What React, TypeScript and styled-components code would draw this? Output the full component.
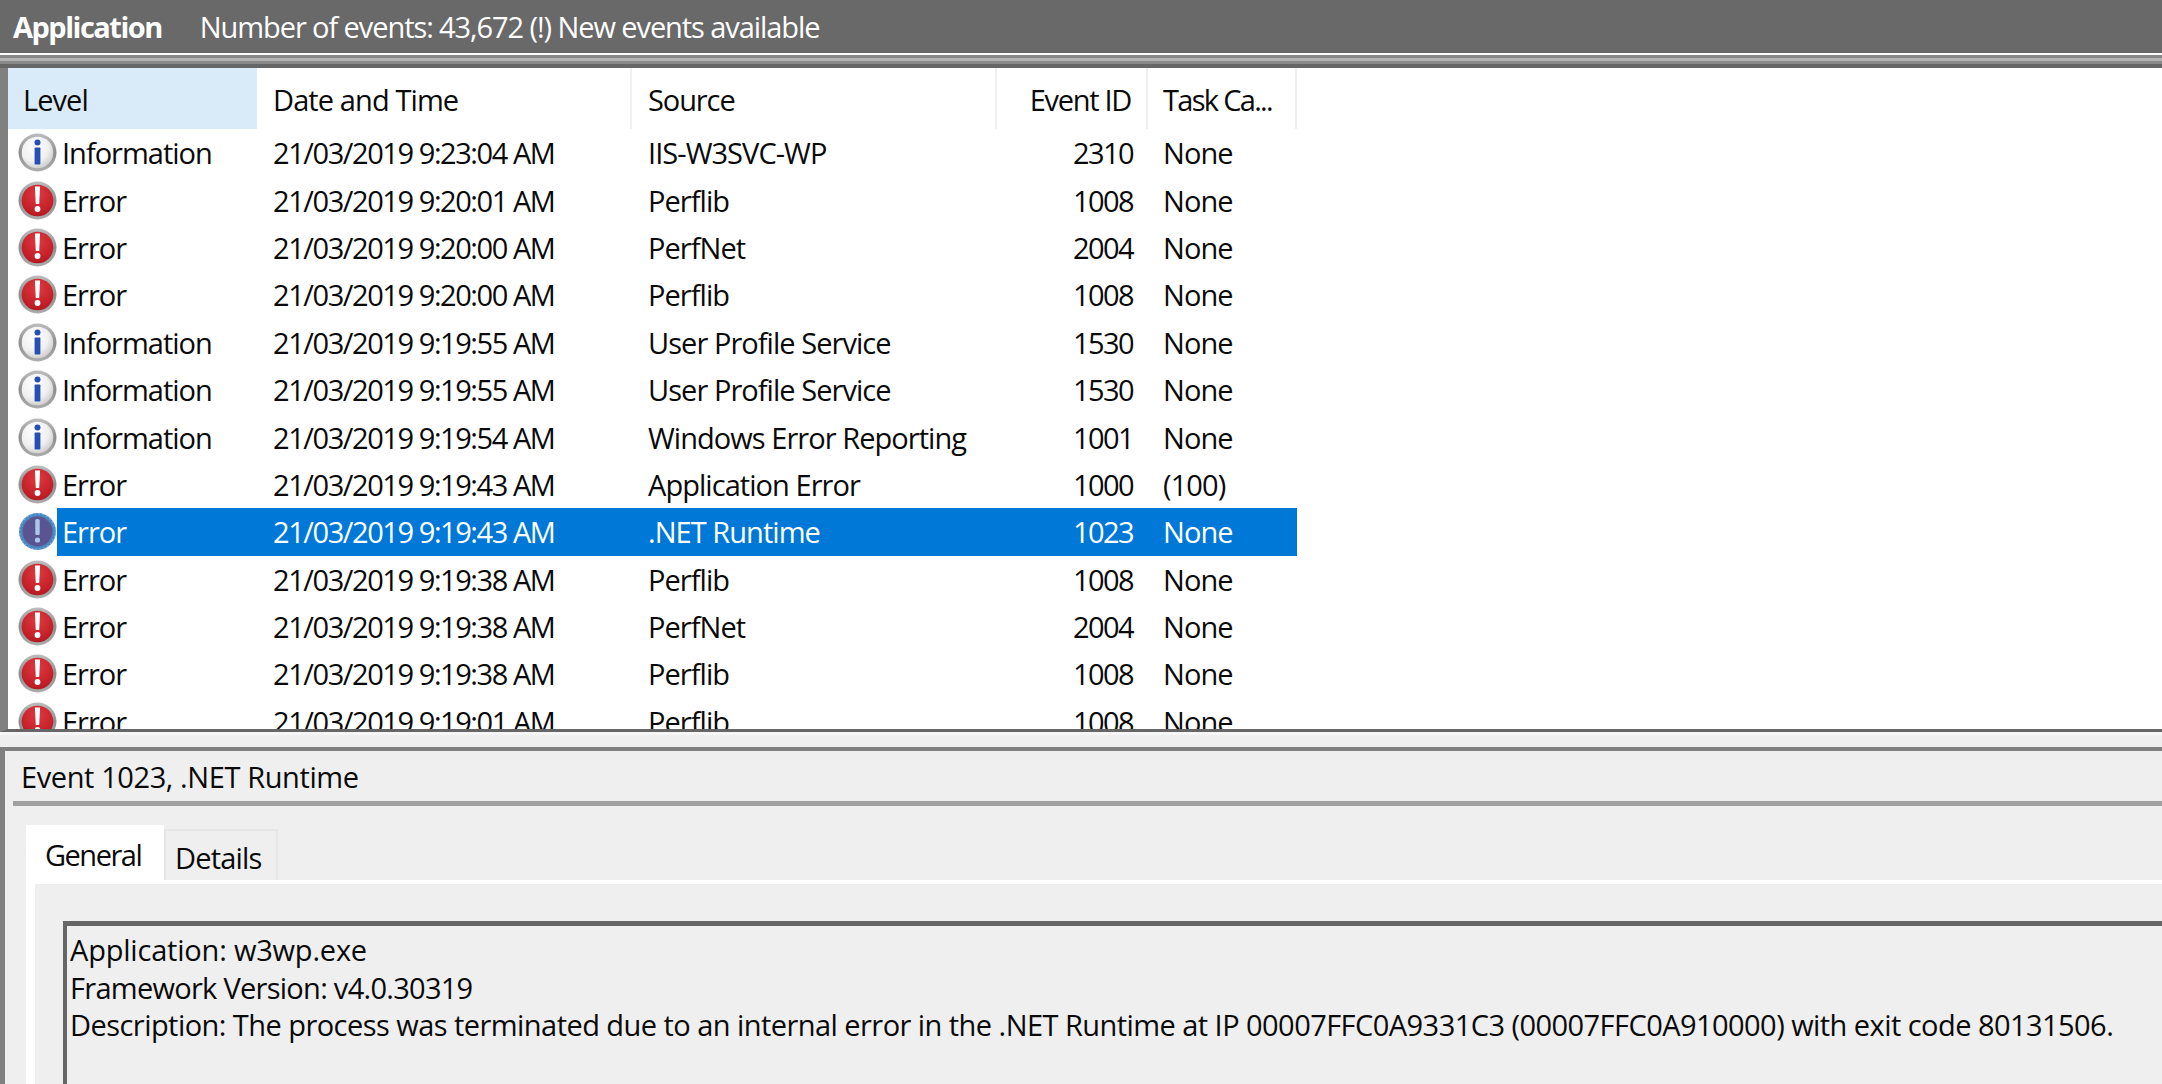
import React from 'react';
import styled, { createGlobalStyle } from 'styled-components';

const GlobalStyle = createGlobalStyle`
  html, body {
    margin: 0;
    padding: 0;
    height: 100%;
    overflow: hidden;
    background: #efefef;
  }
  #root {
    height: 100%;
  }
`;

const Page = styled.div`
  display: flex;
  flex-direction: column;
  height: 1084px;
  font-family: "Open Sans", "Noto Sans", sans-serif;
  font-size: 29px;
  color: #0a0a0a;
  overflow: hidden;
`;

const Banner = styled.div`
  display: flex;
  align-items: center;
  gap: 38px;
  height: 53px;
  flex: none;
  box-sizing: border-box;
  padding: 0 14px 0 13px;
  background: #696969;
  color: #fff;
  letter-spacing: -1.08px;
`;

const BannerTitle = styled.span`
  font-weight: 700;
  letter-spacing: -1.5px;
`;

const Splitter = styled.div`
  height: 15px;
  flex: none;
  box-sizing: border-box;
  border-top: 2px solid #fff;
  background: linear-gradient(#888 0 3px, #b4b4b4 3px 6px, #8a8a8a 6px 9px, #666 9px 13px);
`;

const ListPane = styled.div`
  height: 664px;
  flex: none;
  box-sizing: border-box;
  overflow: hidden;
  background: #fff;
  border-left: 8px solid #808080;
  border-bottom: 3px solid #666;
`;

const ListInner = styled.div`
  width: 1289px;
`;

const HeaderRow = styled.div`
  display: grid;
  grid-template-columns: 249px 375px 365px 151px 149px;
  height: 61px;
  align-items: stretch;
`;

const HeaderCell = styled.div<{ $active?: boolean; $right?: boolean; $pad: number; $tracking: number }>`
  display: flex;
  align-items: center;
  justify-content: ${p => (p.$right ? 'flex-end' : 'flex-start')};
  box-sizing: border-box;
  padding: 2px 15px 0 ${p => p.$pad}px;
  background: ${p => (p.$active ? '#d9ebf9' : 'transparent')};
  border-right: ${p => (p.$active ? 'none' : '2px solid #f0f0f0')};
  letter-spacing: ${p => p.$tracking}px;
  white-space: nowrap;
`;

const Row = styled.div`
  display: flex;
  align-items: center;
  height: 47.4px;
  padding-left: 10px;
`;

const RowIcon = styled.svg`
  width: 39px;
  height: 39px;
  flex: none;
`;

const RowBody = styled.div<{ $selected?: boolean }>`
  display: grid;
  grid-template-columns: 200px 375px 365px 151px 149px;
  flex: 1;
  height: 100%;
  align-items: center;
  background: ${p => (p.$selected ? '#0078d7' : 'transparent')};
  color: ${p => (p.$selected ? '#fff' : '#0a0a0a')};
`;

const Cell = styled.div<{ $right?: boolean; $pad: number; $tracking: number }>`
  box-sizing: border-box;
  padding: 0 15px 0 ${p => p.$pad}px;
  text-align: ${p => (p.$right ? 'right' : 'left')};
  letter-spacing: ${p => p.$tracking}px;
  white-space: nowrap;
`;

const Gap = styled.div`
  height: 15px;
  flex: none;
  background: linear-gradient(#f6f6f6 0 3px, #efefef 3px);
`;

const DetailPane = styled.div`
  flex: 1;
  min-height: 0;
  display: flex;
  flex-direction: column;
  box-sizing: border-box;
  border-top: 4px solid #808080;
  border-left: 5px solid #808080;
  padding-left: 8px;
  background: #efefef;
`;

const DetailTitle = styled.div`
  height: 55px;
  flex: none;
  display: flex;
  align-items: center;
  box-sizing: border-box;
  padding-left: 8px;
  border-bottom: 5px solid #a0a0a0;
  letter-spacing: -0.4px;
`;

const Tabs = styled.div`
  display: flex;
  align-items: flex-end;
  height: 74px;
  flex: none;
  padding: 16px 0 0 13px;
  box-sizing: border-box;
`;

const Tab = styled.div<{ $active?: boolean }>`
  box-sizing: border-box;
  display: flex;
  align-items: center;
  height: ${p => (p.$active ? '58px' : '51px')};
  padding: ${p => (p.$active ? '0 0 0 19px' : '4px 0 0 9px')};
  width: ${p => (p.$active ? '138px' : '114px')};
  margin-bottom: ${p => (p.$active ? '-3px' : '0')};
  position: relative;
  z-index: 1;
  background: ${p => (p.$active ? '#fff' : '#efefef')};
  border: ${p => (p.$active ? 'none' : '2px solid #e6e6e6')};
  border-bottom: none;
  letter-spacing: ${p => (p.$active ? '-1.5px' : '-0.8px')};
`;

const TabPanel = styled.div`
  flex: 1;
  min-height: 0;
  margin-left: 13px;
  box-sizing: border-box;
  border-top: 4px solid #fff;
  border-left: 9px solid #fff;
  padding: 37px 0 0 28px;
  background: #efefef;
`;

const MessageBox = styled.div`
  height: 300px;
  box-sizing: border-box;
  border-top: 5px solid #666;
  border-left: 4px solid #666;
  padding: 5px 0 0 3px;
  line-height: 37.5px;
`;

const MessageLine = styled.div<{ $tracking: number }>`
  letter-spacing: ${p => p.$tracking}px;
  white-space: nowrap;
`;

type Level = 'Information' | 'Error';

interface EventRow {
  level: Level;
  date: string;
  source: string;
  id: string;
  task: string;
}

const rows: EventRow[] = [
  { level: 'Information', date: '21/03/2019 9:23:04 AM', source: 'IIS-W3SVC-WP', id: '2310', task: 'None' },
  { level: 'Error', date: '21/03/2019 9:20:01 AM', source: 'Perflib', id: '1008', task: 'None' },
  { level: 'Error', date: '21/03/2019 9:20:00 AM', source: 'PerfNet', id: '2004', task: 'None' },
  { level: 'Error', date: '21/03/2019 9:20:00 AM', source: 'Perflib', id: '1008', task: 'None' },
  { level: 'Information', date: '21/03/2019 9:19:55 AM', source: 'User Profile Service', id: '1530', task: 'None' },
  { level: 'Information', date: '21/03/2019 9:19:55 AM', source: 'User Profile Service', id: '1530', task: 'None' },
  { level: 'Information', date: '21/03/2019 9:19:54 AM', source: 'Windows Error Reporting', id: '1001', task: 'None' },
  { level: 'Error', date: '21/03/2019 9:19:43 AM', source: 'Application Error', id: '1000', task: '(100)' },
  { level: 'Error', date: '21/03/2019 9:19:43 AM', source: '.NET Runtime', id: '1023', task: 'None' },
  { level: 'Error', date: '21/03/2019 9:19:38 AM', source: 'Perflib', id: '1008', task: 'None' },
  { level: 'Error', date: '21/03/2019 9:19:38 AM', source: 'PerfNet', id: '2004', task: 'None' },
  { level: 'Error', date: '21/03/2019 9:19:38 AM', source: 'Perflib', id: '1008', task: 'None' },
  { level: 'Error', date: '21/03/2019 9:19:01 AM', source: 'Perflib', id: '1008', task: 'None' },
];

const SELECTED_ROW = 8;

const Defs = () => (
  <svg width="0" height="0" style={{ position: 'absolute' }}>
    <defs>
      <linearGradient id="ring" x1="0" y1="0" x2="0" y2="1">
        <stop offset="0" stopColor="#bdbdbd" />
        <stop offset="0.5" stopColor="#8e8e8e" />
        <stop offset="1" stopColor="#adadad" />
      </linearGradient>
      <radialGradient id="face" cx="0.4" cy="0.35" r="0.8">
        <stop offset="0" stopColor="#ffffff" />
        <stop offset="0.55" stopColor="#f0f0f0" />
        <stop offset="1" stopColor="#bcbcbc" />
      </radialGradient>
      <radialGradient id="red" cx="0.5" cy="0.3" r="0.8">
        <stop offset="0" stopColor="#de3a40" />
        <stop offset="0.7" stopColor="#c41f28" />
        <stop offset="1" stopColor="#a0161d" />
      </radialGradient>
    </defs>
  </svg>
);

const LevelIcon = ({ level, selected }: { level: Level; selected?: boolean }) => {
  if (selected) {
    return (
      <RowIcon viewBox="0 0 39 39">
        <circle cx="19.5" cy="19.5" r="18.5" fill="#4a86c0" />
        <circle cx="19.5" cy="19.5" r="17.8" fill="none" stroke="#7fb2e0" strokeWidth="1.2" strokeDasharray="2 2" />
        <circle cx="19.5" cy="19.5" r="15" fill="#5a5590" />
        <rect x="17.3" y="7" width="4.4" height="16" rx="1.6" fill="#a9c8ec" />
        <circle cx="19.5" cy="28" r="2.6" fill="#a9c8ec" />
      </RowIcon>
    );
  }
  if (level === 'Information') {
    return (
      <RowIcon viewBox="0 0 39 39">
        <circle cx="19.5" cy="19.5" r="19" fill="url(#ring)" />
        <circle cx="19.5" cy="19.5" r="15.8" fill="url(#face)" />
        <circle cx="19.5" cy="9.5" r="3" fill="#2450b4" />
        <rect x="16.6" y="14.5" width="5.8" height="17" rx="0.8" fill="#2450b4" />
      </RowIcon>
    );
  }
  return (
    <RowIcon viewBox="0 0 39 39">
      <circle cx="19.5" cy="19.5" r="19" fill="url(#ring)" />
      <circle cx="19.5" cy="19.5" r="15.8" fill="url(#red)" />
      <path d="M16.9 5.5h5.2l-.9 17.5h-3.4z" fill="#fff" />
      <circle cx="19.5" cy="28" r="2.9" fill="#fff" />
    </RowIcon>
  );
};

export default function App() {
  return (
    <>
      <GlobalStyle />
      <Defs />
      <Page>
        <Banner>
          <BannerTitle>Application</BannerTitle>
          <span>Number of events: 43,672 (!) New events available</span>
        </Banner>
        <Splitter />
        <ListPane>
          <ListInner>
            <HeaderRow>
              <HeaderCell $active $pad={15} $tracking={-0.95}>Level</HeaderCell>
              <HeaderCell $pad={16} $tracking={-0.9}>Date and Time</HeaderCell>
              <HeaderCell $pad={16} $tracking={-1.1}>Source</HeaderCell>
              <HeaderCell $right $pad={16} $tracking={-1.3}>Event ID</HeaderCell>
              <HeaderCell $pad={15} $tracking={-1.7}>Task Ca...</HeaderCell>
            </HeaderRow>
            {rows.map((row, i) => (
              <Row key={i}>
                <LevelIcon level={row.level} selected={i === SELECTED_ROW} />
                <RowBody $selected={i === SELECTED_ROW}>
                  <Cell $pad={5} $tracking={-1}>{row.level}</Cell>
                  <Cell $pad={16} $tracking={-1.43}>{row.date}</Cell>
                  <Cell $pad={16} $tracking={-0.95}>{row.source}</Cell>
                  <Cell $right $pad={16} $tracking={-1.6}>{row.id}</Cell>
                  <Cell $pad={15} $tracking={-0.9}>{row.task}</Cell>
                </RowBody>
              </Row>
            ))}
          </ListInner>
        </ListPane>
        <Gap />
        <DetailPane>
          <DetailTitle>Event 1023, .NET Runtime</DetailTitle>
          <Tabs>
            <Tab $active>General</Tab>
            <Tab>Details</Tab>
          </Tabs>
          <TabPanel>
            <MessageBox>
              <MessageLine $tracking={-0.2}>Application: w3wp.exe</MessageLine>
              <MessageLine $tracking={-0.72}>Framework Version: v4.0.30319</MessageLine>
              <MessageLine $tracking={-0.55}>
                Description: The process was terminated due to an internal error in the .NET Runtime at IP 00007FFC0A9331C3 (00007FFC0A910000) with exit code 80131506.
              </MessageLine>
            </MessageBox>
          </TabPanel>
        </DetailPane>
      </Page>
    </>
  );
}
